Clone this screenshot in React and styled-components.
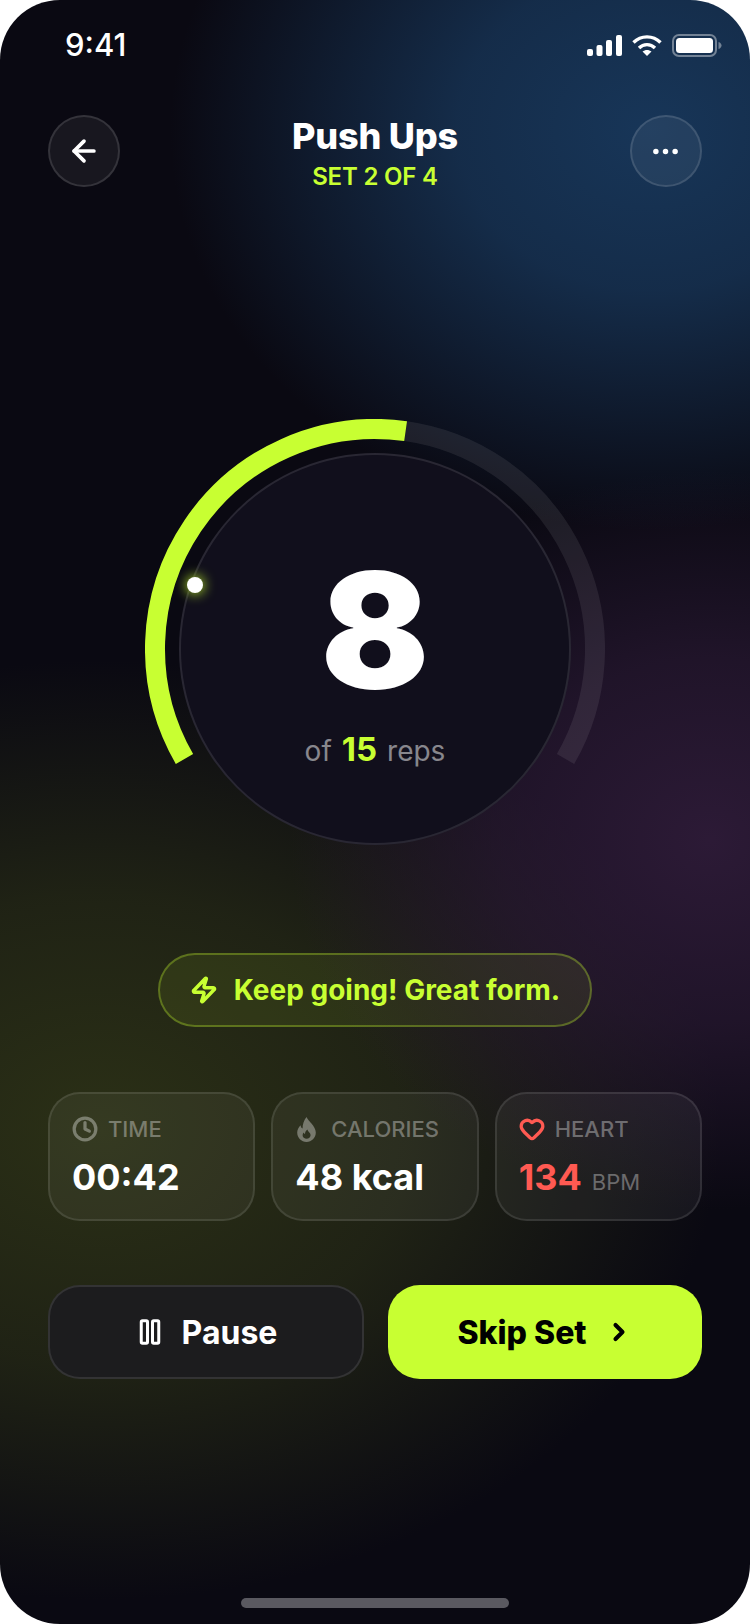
import React from "react";
import styled, { createGlobalStyle } from "styled-components";
import { ArrowLeft, ChevronRight, Clock, Ellipsis, Heart, Pause, Zap } from "lucide-react";

const lime = "#c8ff32";
const red = "#ff5a52";

const GlobalStyle = createGlobalStyle`
  * { box-sizing: border-box; }
  html, body { margin: 0; padding: 0; background: #fff; }
  body { font-family: Inter, "Noto Sans", sans-serif; }
`;

const Screen = styled.div`
  width: 750px;
  height: 1624px;
  border-radius: 60px;
  overflow: hidden;
  display: flex;
  flex-direction: column;
  color: #fff;
  background:
    radial-gradient(ellipse 480px 400px at 650px 130px, rgba(24, 56, 92, 0.95) 0%, rgba(24, 56, 92, 0.75) 40%, rgba(24, 56, 92, 0) 100%),
    radial-gradient(ellipse 420px 370px at 710px 840px, rgba(46, 27, 56, 0.95) 0%, rgba(46, 27, 56, 0.6) 50%, rgba(46, 27, 56, 0) 100%),
    radial-gradient(ellipse 620px 470px at 100px 1130px, rgba(43, 48, 22, 1) 0%, rgba(43, 48, 22, 0.65) 50%, rgba(43, 48, 22, 0) 100%),
    #0a0912;
`;

const StatusBar = styled.div`
  height: 115px;
  padding: 24px 28px 0 65px;
  display: flex;
  justify-content: space-between;
  align-items: flex-start;
`;

const Clockface = styled.div`
  font-size: 31px;
  font-weight: 500;
  line-height: 42px;
`;

const StatusIcons = styled.div`
  display: flex;
  align-items: center;
  gap: 10px;
  height: 42px;
`;

const Header = styled.header`
  height: 72px;
  padding: 0 48px;
  display: flex;
  justify-content: space-between;
  align-items: flex-start;
`;

const RoundButton = styled.button`
  width: 72px;
  height: 72px;
  padding: 0;
  border-radius: 50%;
  border: 2px solid rgba(255, 255, 255, 0.12);
  background: rgba(255, 255, 255, 0.06);
  color: #fff;
  display: flex;
  align-items: center;
  justify-content: center;
`;

const TitleBlock = styled.div`
  text-align: center;
`;

const Title = styled.h1`
  margin: 0;
  font-size: 36px;
  line-height: 42px;
  font-weight: 800;
  letter-spacing: -0.2px;
`;

const SetLabel = styled.div`
  margin-top: 6px;
  font-size: 24px;
  line-height: 28px;
  font-weight: 600;
  letter-spacing: -0.2px;
  color: ${lime};
`;

const RingStage = styled.div`
  position: relative;
  width: 460px;
  height: 460px;
  margin: 232px auto 74px;
  display: grid;
  place-items: center;

  & > * {
    grid-area: 1 / 1;
  }
`;

const InnerCircle = styled.div`
  width: 392px;
  height: 392px;
  border-radius: 50%;
  background: #110f1c;
  border: 2px solid rgba(255, 255, 255, 0.1);
  display: flex;
  flex-direction: column;
  align-items: center;
`;

const RepCount = styled.div`
  margin-top: 86px;
  font-size: 160px;
  line-height: 178px;
  font-weight: 900;
`;

const RepCaption = styled.div`
  margin-top: 10px;
  font-size: 28px;
  line-height: 40px;
  color: rgba(255, 255, 255, 0.5);
  display: flex;
  align-items: baseline;
  gap: 10px;

  strong {
    font-size: 33px;
    font-weight: 700;
    color: ${lime};
  }
`;

const GlowDot = styled.div`
  position: absolute;
  left: 42px;
  top: 158px;
  width: 16px;
  height: 16px;
  border-radius: 50%;
  background: #fff;
  box-shadow: 0 0 12px 2px rgba(200, 255, 46, 0.7);
`;

const Pill = styled.div`
  align-self: center;
  width: 434px;
  height: 74px;
  border-radius: 37px;
  border: 2px solid rgba(200, 255, 46, 0.3);
  background: rgba(200, 255, 46, 0.08);
  color: ${lime};
  display: flex;
  align-items: center;
  justify-content: center;
  gap: 16px;
  font-size: 28px;
  font-weight: 700;
`;

const StatsRow = styled.div`
  margin-top: 65px;
  padding: 0 48px;
  display: grid;
  grid-template-columns: repeat(3, 1fr);
  gap: 16px;
`;

const StatCard = styled.div`
  height: 129px;
  padding: 21px 22px 0;
  border-radius: 32px;
  border: 2px solid rgba(255, 255, 255, 0.1);
  background: rgba(255, 255, 255, 0.05);
`;

const StatLabel = styled.div`
  display: flex;
  align-items: center;
  gap: 10px;
  height: 28px;
  font-size: 22px;
  font-weight: 500;
  color: rgba(255, 255, 255, 0.35);

  svg {
    color: ${(p) => p.$iconColor || "rgba(255, 255, 255, 0.35)"};
    flex: none;
  }
`;

const FlameSvg = styled.svg`
  margin: 0 5px 0 2px;
`;

const StatValue = styled.div`
  margin-top: 11px;
  font-size: 36px;
  line-height: 46px;
  font-weight: 700;
  color: ${(p) => p.$color || "#fff"};
  display: flex;
  align-items: baseline;
  gap: 10px;
`;

const Unit = styled.span`
  font-size: 22px;
  font-weight: 400;
  color: rgba(255, 255, 255, 0.35);
`;

const Actions = styled.div`
  margin-top: 64px;
  padding: 0 48px;
  display: grid;
  grid-template-columns: 316px 1fr;
  gap: 24px;
`;

const ActionButton = styled.button`
  height: 94px;
  padding: 0;
  border-radius: 32px;
  font-family: inherit;
  font-size: 32px;
  font-weight: ${(p) => (p.$primary ? 800 : 700)};
  display: flex;
  align-items: center;
  justify-content: center;
  gap: ${(p) => (p.$primary ? "18px" : "17px")};
  color: ${(p) => (p.$primary ? "#000" : "#fff")};
  background: ${(p) => (p.$primary ? lime : "#1c1c1e")};
  border: ${(p) => (p.$primary ? "none" : "2px solid rgba(255, 255, 255, 0.1)")};
`;

const HomeBar = styled.div`
  margin: auto auto 16px;
  width: 268px;
  height: 10px;
  border-radius: 5px;
  background: #5a5960;
`;

const SignalIcon = () => (
  <svg width="35" height="21" viewBox="0 0 35 21" fill="#fff">
    <rect x="0" y="14" width="6" height="7" rx="2" />
    <rect x="9.5" y="10" width="6" height="11" rx="2" />
    <rect x="19" y="5" width="6" height="16" rx="2" />
    <rect x="29" y="0" width="6" height="21" rx="2" />
  </svg>
);

const WifiIcon = () => (
  <svg width="30" height="21" viewBox="0 0 30 21" fill="none" stroke="#fff" strokeWidth="3.4">
    <path d="M1.5 7.5C9 0 21 0 28.5 7.5" />
    <path d="M7 13C11.5 8.5 18.5 8.5 23 13" />
    <path d="M15 21L10.5 16.6C13 14.4 17 14.4 19.5 16.6Z" fill="#fff" stroke="none" />
  </svg>
);

const BatteryIcon = () => (
  <svg width="50" height="23" viewBox="0 0 50 23">
    <rect x="1" y="1" width="43" height="21" rx="6" fill="none" stroke="#fff" strokeOpacity="0.4" strokeWidth="2" />
    <rect x="4" y="4" width="37" height="15" rx="3.5" fill="#fff" />
    <path d="M46.5 8C48.5 8.6 49.5 10 49.5 11.5C49.5 13 48.5 14.4 46.5 15Z" fill="#fff" fillOpacity="0.4" />
  </svg>
);

const FlameIcon = () => (
  <FlameSvg width="19" height="25" viewBox="0 0 19 25">
    <path
      fillRule="evenodd"
      fill="currentColor"
      d="M9.5 0C11 4 18.8 9 18.8 15.6C18.8 21 14.6 25 9.5 25C4.4 25 0.2 21 0.2 15.6C0.2 12.6 1.8 10 3.6 8.2C3.8 10 4.5 11 5.6 11.6C5.4 7.6 7 3 9.5 0ZM10.4 12.4C10.8 14.6 13.6 15.6 13.6 18C13.6 20.2 11.8 21.8 9.6 21.8C7.4 21.8 5.6 20.2 5.6 18.2C5.6 17.2 6 16.2 6.6 15.6C6.9 16.4 7.4 16.9 8 17.1C8 15.2 8.8 13.6 10.4 12.4Z"
    />
  </FlameSvg>
);

// 240deg gauge, 8 of 15 reps filled
const gaugeArc = (from, to) => {
  const r = 220;
  const point = (deg) => {
    const a = (deg * Math.PI) / 180;
    return `${(230 + r * Math.cos(a)).toFixed(2)} ${(230 + r * Math.sin(a)).toFixed(2)}`;
  };
  const large = to - from > 180 ? 1 : 0;
  return `M${point(from)} A${r} ${r} 0 ${large} 1 ${point(to)}`;
};

const Gauge = ({ reps, total }) => {
  const start = 150;
  const end = start + (240 * reps) / total;
  return (
    <svg width="460" height="460" viewBox="0 0 460 460" fill="none" strokeWidth="20">
      <path d={gaugeArc(end, 390)} stroke="rgba(255,255,255,0.08)" />
      <path d={gaugeArc(start, end)} stroke={lime} />
    </svg>
  );
};

export default function App() {
  return (
    <>
      <GlobalStyle />
      <Screen>
        <StatusBar>
          <Clockface>9:41</Clockface>
          <StatusIcons>
            <SignalIcon />
            <WifiIcon />
            <BatteryIcon />
          </StatusIcons>
        </StatusBar>

        <Header>
          <RoundButton>
            <ArrowLeft size={34} strokeWidth={2.6} />
          </RoundButton>
          <TitleBlock>
            <Title>Push Ups</Title>
            <SetLabel>SET 2 OF 4</SetLabel>
          </TitleBlock>
          <RoundButton>
            <Ellipsis size={33} strokeWidth={2} />
          </RoundButton>
        </Header>

        <RingStage>
          <Gauge reps={8} total={15} />
          <InnerCircle>
            <RepCount>8</RepCount>
            <RepCaption>
              of <strong>15</strong> reps
            </RepCaption>
          </InnerCircle>
          <GlowDot />
        </RingStage>

        <Pill>
          <Zap size={28} strokeWidth={3} />
          Keep going! Great form.
        </Pill>

        <StatsRow>
          <StatCard>
            <StatLabel>
              <Clock size={26} strokeWidth={3} />
              TIME
            </StatLabel>
            <StatValue>00:42</StatValue>
          </StatCard>
          <StatCard>
            <StatLabel>
              <FlameIcon />
              CALORIES
            </StatLabel>
            <StatValue>48 kcal</StatValue>
          </StatCard>
          <StatCard>
            <StatLabel $iconColor={red}>
              <Heart size={26} strokeWidth={3} />
              HEART
            </StatLabel>
            <StatValue $color={red}>
              134 <Unit>BPM</Unit>
            </StatValue>
          </StatCard>
        </StatsRow>

        <Actions>
          <ActionButton>
            <Pause size={30} strokeWidth={2.4} />
            Pause
          </ActionButton>
          <ActionButton $primary>
            Skip Set
            <ChevronRight size={28} strokeWidth={3.5} />
          </ActionButton>
        </Actions>

        <HomeBar />
      </Screen>
    </>
  );
}
